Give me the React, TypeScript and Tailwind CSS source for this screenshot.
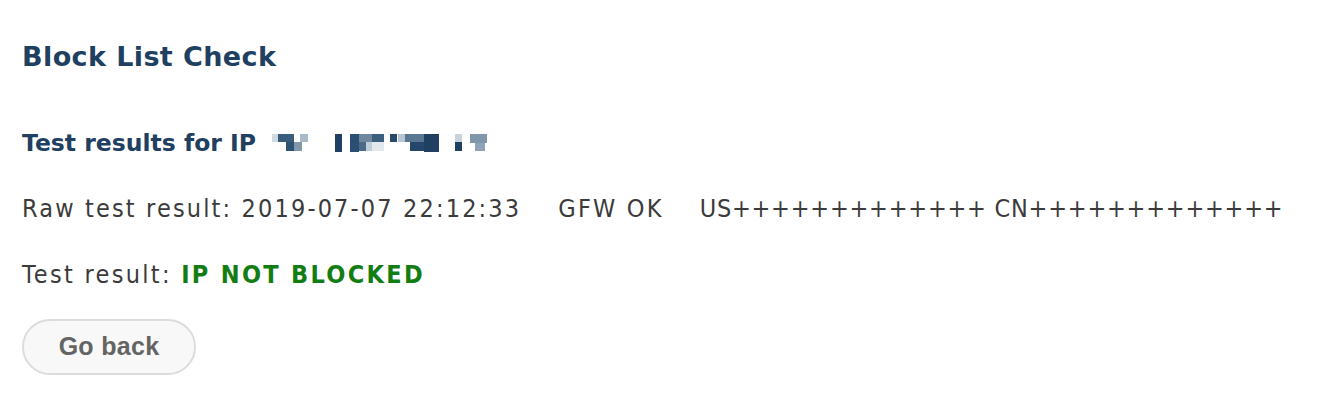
export default function App() {
  return (
    <div className="min-h-screen w-full bg-white pl-[22px] pt-[41px]">
      <h1 className="text-[27px] leading-[32px] font-bold tracking-[0.4px] text-[#1f4060] [font-family:'DejaVu_Sans',Verdana,sans-serif]">
        Block List Check
      </h1>

      <h2 className="mt-[55px] flex items-center text-[23.5px] leading-[30px] font-bold text-[#1f4060] [font-family:'DejaVu_Sans',Verdana,sans-serif]">
        Test results for IP
        {/* pixelated, redacted address */}
        <svg className="ml-[14px]" width="225" height="18" viewBox="0 0 225 18">
          <rect x="2" y="0" width="6" height="8" fill="#cfd9e2" />
          <rect x="8" y="0" width="16" height="8" fill="#3a5d7c" />
          <rect x="16" y="8" width="8" height="9" fill="#2f5373" />
          <rect x="24" y="8" width="8" height="9" fill="#8298ad" />
          <rect x="30" y="0" width="8" height="8" fill="#a9bac9" />
          <rect x="65" y="0" width="7" height="18" fill="#1f4060" />
          <rect x="80" y="0" width="9" height="18" fill="#2b4f70" />
          <rect x="89" y="0" width="13" height="8" fill="#6f879e" />
          <rect x="89" y="8" width="7" height="9" fill="#4a6a88" />
          <rect x="96" y="8" width="6" height="9" fill="#c0ccd7" />
          <rect x="102" y="0" width="12" height="8" fill="#3d5f7e" />
          <rect x="102" y="8" width="12" height="9" fill="#e3e8ed" />
          <rect x="120" y="0" width="7" height="8" fill="#27496a" />
          <rect x="128" y="0" width="8" height="8" fill="#b8c6d3" />
          <rect x="135" y="0" width="19" height="8" fill="#5a7792" />
          <rect x="140" y="8" width="14" height="9" fill="#24466a" />
          <rect x="154" y="0" width="15" height="18" fill="#1f4060" />
          <rect x="185" y="0" width="7" height="8" fill="#c8d3dd" />
          <rect x="185" y="8" width="7" height="9" fill="#1f4060" />
          <rect x="200" y="0" width="17" height="9" fill="#7f96ab" />
          <rect x="205" y="9" width="10" height="8" fill="#8fa3b6" />
        </svg>
      </h2>

      <p className="mt-[36px] text-[25px] leading-[30px] text-[#3b3b3b] whitespace-pre [font-family:'DejaVu_Sans_Condensed','DejaVu_Sans',sans-serif]">
        <span className="tracking-[2.15px]">Raw test result: 2019-07-07 22:12:33</span>
        <span className="ml-[37px] tracking-[2.2px]">GFW OK</span>
        <span className="ml-[36px] tracking-[0.75px]">US+++++++++++++ CN+++++++++++++</span>
      </p>

      <p className="mt-[36px] text-[25px] leading-[30px] tracking-[2.3px] text-[#3b3b3b] [font-family:'DejaVu_Sans_Condensed','DejaVu_Sans',sans-serif]">
        Test result: <span className="font-bold tracking-[2.3px] text-[#127d12]">IP NOT BLOCKED</span>
      </p>

      <button className="mt-[29px] h-[56px] w-[174px] rounded-full border-2 border-[#dcdcdc] bg-[#f8f8f8] text-[25px] font-bold tracking-[0.3px] text-[#646464] [font-family:'Liberation_Sans',Arial,sans-serif]">
        Go back
      </button>
    </div>
  );
}
